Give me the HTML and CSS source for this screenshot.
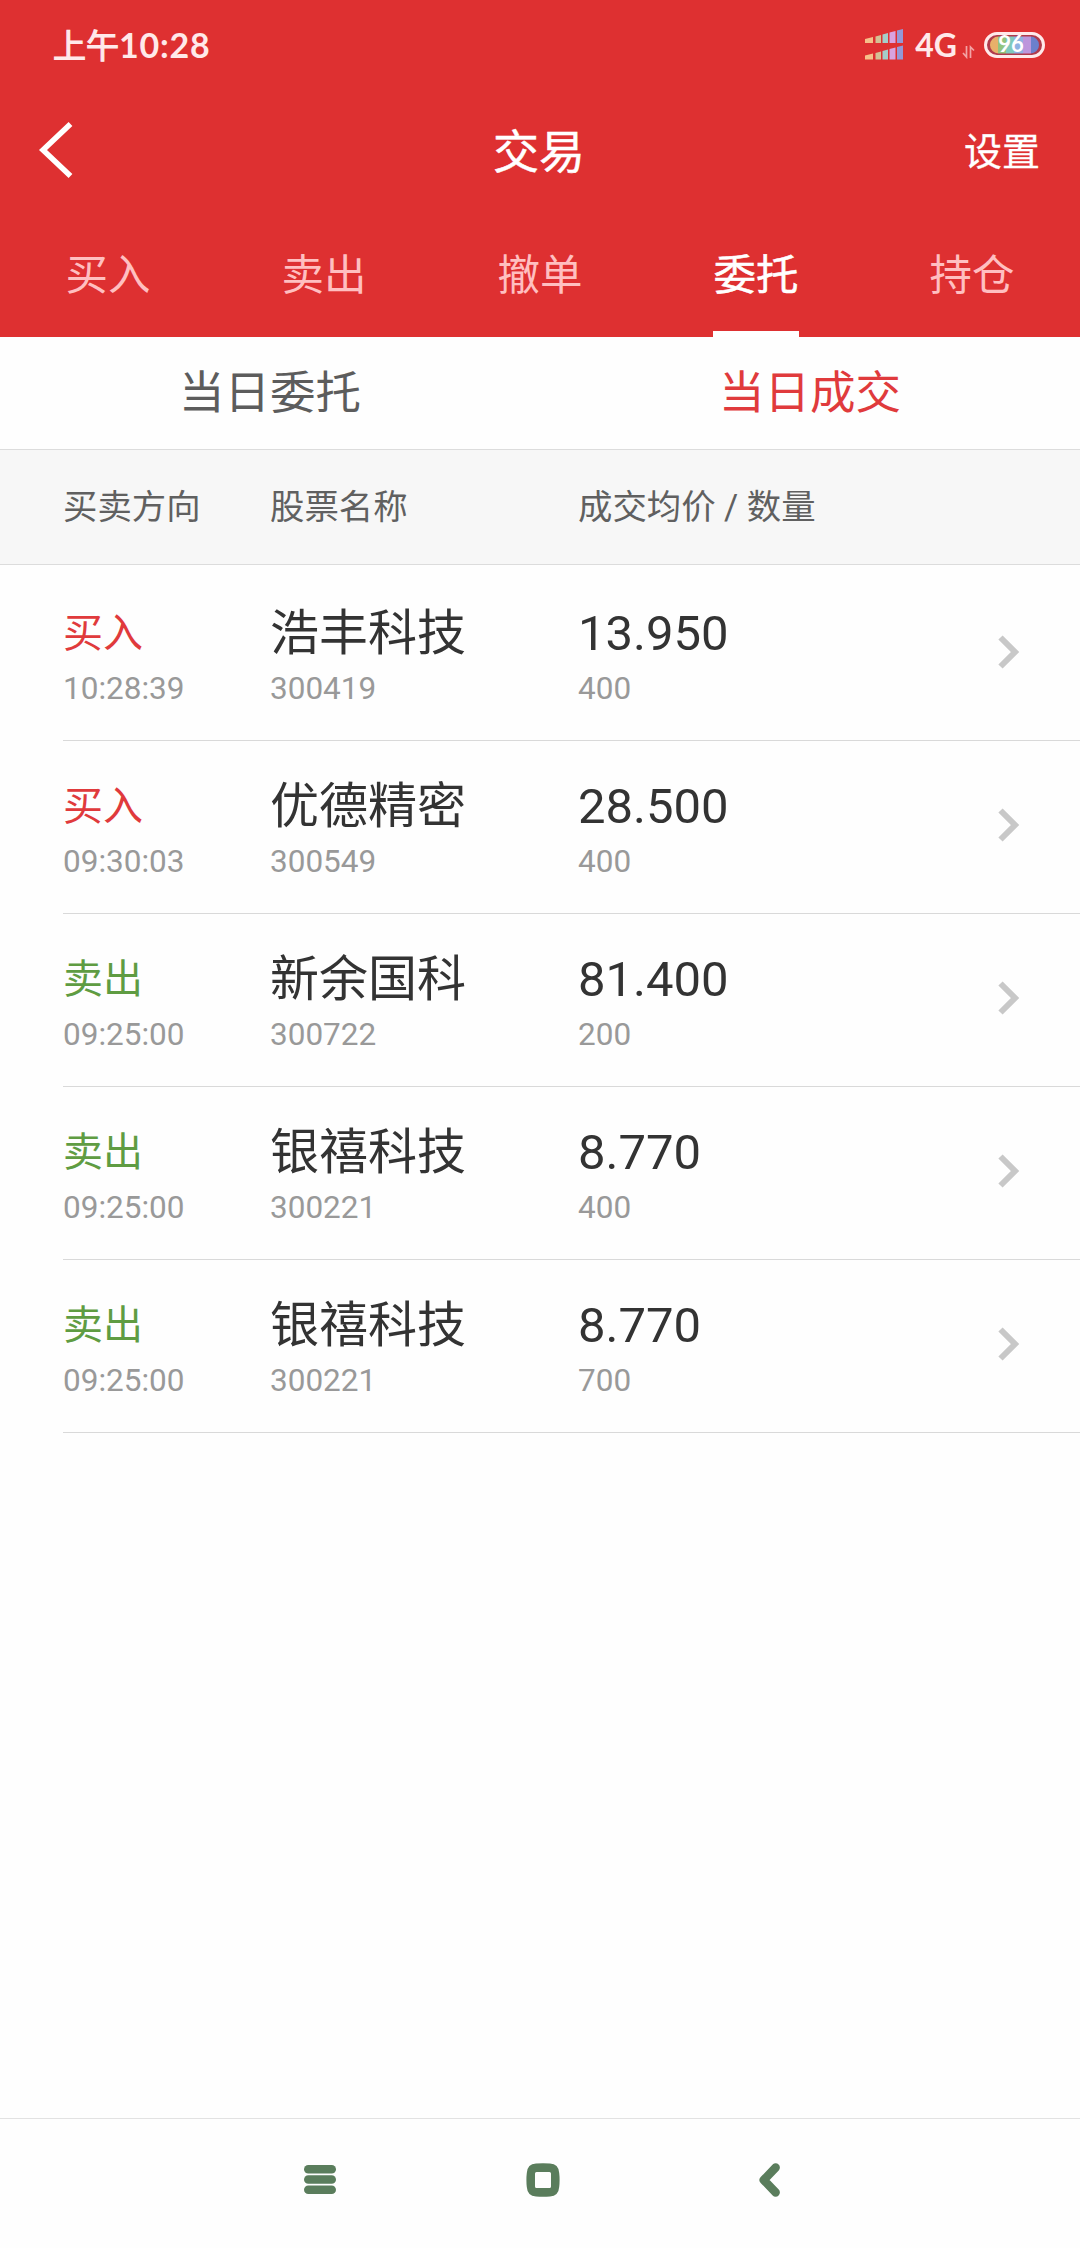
FILE: index.html
```
<!DOCTYPE html>
<html lang="zh-CN">
<head>
    <meta charset="UTF-8">
    <meta name="viewport" content="width=device-width, initial-scale=1.0">
    <title>交易</title>
    <link rel="stylesheet" href="styles.css">
</head>
<body>
    <header class="top">
        <div class="status">
            <div class="clock"><span class="ampm">上午</span>10:28</div>
            <div class="status-icons">
                <svg class="signal" width="40" height="32" viewBox="0 0 40 32">
                    <defs>
                        <g id="bars">
                            <path d="M0 10 L8 8 V14 H0z" fill="#f6c08a"/>
                            <path d="M10.5 7.5 L16 6 V14 H10.5z" fill="#d3c295"/>
                            <path d="M17.5 5.5 L23 4 V14 H17.5z" fill="#a5cdc9"/>
                            <path d="M24.5 3.5 L30.5 2 V14 H24.5z" fill="#d9a3e0"/>
                            <path d="M32 1.5 L38 0 V14 H32z" fill="#9498d6"/>
                        </g>
                    </defs>
                    <use href="#bars"/>
                    <use href="#bars" y="16.5"/>
                </svg>
                <span class="net">4G</span>
                <svg class="updown" width="14" height="14" viewBox="0 0 14 14">
                    <path d="M4.5 1 V12 L1 8 M8.5 13 V2 L12 5.5" fill="none" stroke="#f3a3a5" stroke-width="1.7"/>
                </svg>
                <svg class="battery" width="61" height="26" viewBox="0 0 61 26">
                    <clipPath id="cell"><rect x="6" y="4.5" width="49" height="17" rx="8.5"/></clipPath>
                    <rect x="1.5" y="1.5" width="58" height="23" rx="11.5" fill="#b03a4c" stroke="#ffe9ea" stroke-width="3"/>
                    <g clip-path="url(#cell)">
                        <rect x="6" y="4" width="8" height="18" fill="#e8b06a"/>
                        <rect x="14" y="4" width="8" height="18" fill="#92c47e"/>
                        <rect x="22" y="4" width="8" height="18" fill="#7fc9bd"/>
                        <rect x="30" y="4" width="9" height="18" fill="#8fb2e2"/>
                        <rect x="39" y="4" width="8" height="18" fill="#bd96dc"/>
                        <rect x="47" y="4" width="9" height="18" fill="#6c80cc"/>
                    </g>
                    <text class="level" x="27" y="20" text-anchor="middle">96</text>
                </svg>
            </div>
        </div>
        <div class="navbar">
            <svg class="back" width="36" height="58" viewBox="0 0 36 58">
                <path d="M32.5 3 L5 29 L32.5 55" fill="none" stroke="#fff" stroke-width="5.5"/>
            </svg>
            <h1>交易</h1>
            <span class="setting">设置</span>
        </div>
        <nav class="tabs">
            <div class="tab"><span>买入</span></div>
            <div class="tab"><span>卖出</span></div>
            <div class="tab"><span>撤单</span></div>
            <div class="tab active"><span>委托</span></div>
            <div class="tab"><span>持仓</span></div>
        </nav>
    </header>

    <div class="subtabs">
        <div class="subtab">当日委托</div>
        <div class="subtab active">当日成交</div>
    </div>

    <div class="grid thead">
        <span>买卖方向</span>
        <span>股票名称</span>
        <span>成交均价 / 数量</span>
    </div>

    <main class="list">
        <div class="grid row">
            <div><div class="side buy">买入</div><div class="sub">10:28:39</div></div>
            <div><div class="main">浩丰科技</div><div class="sub">300419</div></div>
            <div><div class="main">13.950</div><div class="sub">400</div></div>
            <svg class="arrow" width="22" height="34" viewBox="0 0 22 34"><path d="M2.5 2.5 L17 17 L2.5 31.5"/></svg>
        </div>
        <div class="grid row">
            <div><div class="side buy">买入</div><div class="sub">09:30:03</div></div>
            <div><div class="main">优德精密</div><div class="sub">300549</div></div>
            <div><div class="main">28.500</div><div class="sub">400</div></div>
            <svg class="arrow" width="22" height="34" viewBox="0 0 22 34"><path d="M2.5 2.5 L17 17 L2.5 31.5"/></svg>
        </div>
        <div class="grid row">
            <div><div class="side sell">卖出</div><div class="sub">09:25:00</div></div>
            <div><div class="main">新余国科</div><div class="sub">300722</div></div>
            <div><div class="main">81.400</div><div class="sub">200</div></div>
            <svg class="arrow" width="22" height="34" viewBox="0 0 22 34"><path d="M2.5 2.5 L17 17 L2.5 31.5"/></svg>
        </div>
        <div class="grid row">
            <div><div class="side sell">卖出</div><div class="sub">09:25:00</div></div>
            <div><div class="main">银禧科技</div><div class="sub">300221</div></div>
            <div><div class="main">8.770</div><div class="sub">400</div></div>
            <svg class="arrow" width="22" height="34" viewBox="0 0 22 34"><path d="M2.5 2.5 L17 17 L2.5 31.5"/></svg>
        </div>
        <div class="grid row">
            <div><div class="side sell">卖出</div><div class="sub">09:25:00</div></div>
            <div><div class="main">银禧科技</div><div class="sub">300221</div></div>
            <div><div class="main">8.770</div><div class="sub">700</div></div>
            <svg class="arrow" width="22" height="34" viewBox="0 0 22 34"><path d="M2.5 2.5 L17 17 L2.5 31.5"/></svg>
        </div>
    </main>

    <footer class="sysnav">
        <svg width="34" height="34" viewBox="0 0 34 34" fill="#5a7d5c">
            <rect x="1" y="2" width="32" height="8.6" rx="4.3"/>
            <rect x="1" y="12.2" width="32" height="8.6" rx="4.3"/>
            <rect x="1" y="22.4" width="32" height="8.6" rx="4.3"/>
        </svg>
        <svg class="home" width="34" height="34" viewBox="0 0 34 34">
            <path fill="#5a7d5c" fill-rule="evenodd" d="M10 .6 Q17 -.2 24 .6 Q32.6 1 33.2 10 Q34 17 33.2 24 Q32.6 33 24 33.4 Q17 34.2 10 33.4 Q1.4 33 .8 24 Q0 17 .8 10 Q1.4 1 10 .6z M10.5 9 Q9 9 9 10.5 V23.5 Q9 25 10.5 25 H23.5 Q25 25 25 23.5 V10.5 Q25 9 23.5 9z"/>
        </svg>
        <svg width="34" height="34" viewBox="0 0 34 34">
            <path d="M23.7 4.5 L11.7 17 L23.7 29.5" fill="none" stroke="#5a7d5c" stroke-width="8.4" stroke-linecap="round" stroke-linejoin="round"/>
        </svg>
    </footer>
</body>
</html>
```
FILE: styles.css
```
* { box-sizing: border-box; }
body { margin: 0; height: 2248px; display: flex; flex-direction: column; background: #fefefe; color: #333; font-family: Roboto, "Noto Sans CJK SC", sans-serif; }
svg { display: block; }

.top { height: 337px; background: #de3031; color: #fff; }
.status { height: 90px; padding: 0 35px 1px 53px; display: flex; justify-content: space-between; align-items: center; color: #ffe9ea; font-family: Lato, "Noto Sans CJK SC", sans-serif; font-weight: 700; }
.clock { font-size: 34px; line-height: 50px; letter-spacing: 0.8px; display: flex; align-items: baseline; }
.ampm { font-size: 33px; font-weight: 400; letter-spacing: 0; -webkit-text-stroke: 1.2px #ffe9ea; }
.status-icons { display: flex; align-items: center; }
.net { font-size: 32px; line-height: 40px; margin-left: 10px; }
.updown { margin: 14px 8px 0 5px; }
.battery { overflow: visible; }
.level { font: 700 22px/26px Lato, sans-serif; fill: #fff; }

.navbar { height: 120px; padding: 0 40px 0 38px; display: grid; grid-template-columns: 1fr auto 1fr; align-items: center; }
.navbar h1 { margin: 0; padding-top: 3px; font-size: 46px; font-weight: 400; line-height: 60px; -webkit-text-stroke: 0.5px #fff; }
.setting { justify-self: end; padding-top: 3px; font-size: 38px; line-height: 56px; -webkit-text-stroke: 0.3px #fff; }

.tabs { height: 127px; display: flex; }
.tab { flex: 1; display: flex; justify-content: center; font-size: 42.5px; line-height: 131px; color: #ffbfc0; }
.tab.active { color: #fff; -webkit-text-stroke: 0.5px #fff; }
.tab.active span { border-bottom: 6px solid #fff; height: 127px; }

.subtabs { height: 113px; display: flex; border-bottom: 1px solid #dcdcdc; }
.subtab { flex: 1; text-align: center; font-size: 45.5px; line-height: 114px; color: #5c5c5c; }
.subtab.active { color: #e03a3c; }

.grid { display: grid; grid-template-columns: 207px 308px 1fr auto; }
.thead { height: 115px; padding-left: 63px; background: #f7f7f7; border-bottom: 1px solid #dcdcdc; font-size: 34.4px; line-height: 115px; color: #606060; }

.list { flex: 1; padding-left: 63px; }
.row { height: 173px; padding: 35px 60px 0 0; border-bottom: 1px solid #d9d9d9; }
.row:first-child { height: 176px; padding-top: 38px; }
.side, .main { height: 62px; line-height: 62px; white-space: nowrap; }
.side { font-size: 40px; }
.main { font-size: 49px; }
.buy { color: #e03a3c; }
.sell { color: #5f9c42; }
.sub { font-size: 31.5px; line-height: 48px; color: #999; }
.arrow { margin-top: 32px; }
.arrow path { fill: none; stroke: #c8c8c8; stroke-width: 6; }

.sysnav { height: 130px; padding: 0 294px 7px 303px; display: flex; justify-content: space-between; align-items: center; border-top: 1px solid #e2e2e2; }
.home { margin-right: 3px; }
```
